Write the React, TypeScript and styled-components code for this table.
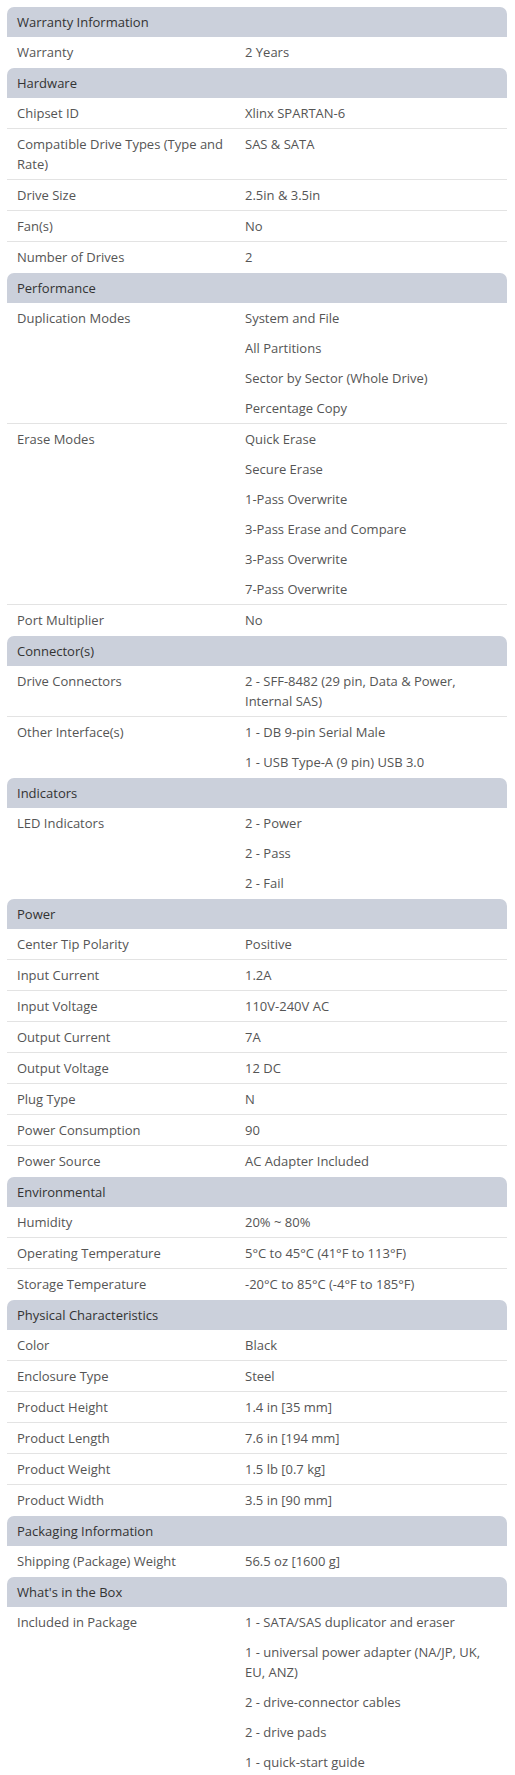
import styled, { createGlobalStyle } from "styled-components";

const GlobalStyle = createGlobalStyle`
	body {
		margin: 0;
		background: #fff;
		font-family: "Open Sans", "Liberation Sans", sans-serif;
	}
`;

type Spec = { label: string; values: string[] };
type Section = { title: string; rows: Spec[] };

const sections: Section[] = [
	{ title: "Warranty Information", rows: [{ label: "Warranty", values: ["2 Years"] }] },
	{
		title: "Hardware",
		rows: [
			{ label: "Chipset ID", values: ["Xlinx SPARTAN-6"] },
			{ label: "Compatible Drive Types (Type and Rate)", values: ["SAS & SATA"] },
			{ label: "Drive Size", values: ["2.5in & 3.5in"] },
			{ label: "Fan(s)", values: ["No"] },
			{ label: "Number of Drives", values: ["2"] },
		],
	},
	{
		title: "Performance",
		rows: [
			{
				label: "Duplication Modes",
				values: ["System and File", "All Partitions", "Sector by Sector (Whole Drive)", "Percentage Copy"],
			},
			{
				label: "Erase Modes",
				values: [
					"Quick Erase",
					"Secure Erase",
					"1-Pass Overwrite",
					"3-Pass Erase and Compare",
					"3-Pass Overwrite",
					"7-Pass Overwrite",
				],
			},
			{ label: "Port Multiplier", values: ["No"] },
		],
	},
	{
		title: "Connector(s)",
		rows: [
			{ label: "Drive Connectors", values: ["2 - SFF-8482 (29 pin, Data & Power, Internal SAS)"] },
			{ label: "Other Interface(s)", values: ["1 - DB 9-pin Serial Male", "1 - USB Type-A (9 pin) USB 3.0"] },
		],
	},
	{
		title: "Indicators",
		rows: [{ label: "LED Indicators", values: ["2 - Power", "2 - Pass", "2 - Fail"] }],
	},
	{
		title: "Power",
		rows: [
			{ label: "Center Tip Polarity", values: ["Positive"] },
			{ label: "Input Current", values: ["1.2A"] },
			{ label: "Input Voltage", values: ["110V-240V AC"] },
			{ label: "Output Current", values: ["7A"] },
			{ label: "Output Voltage", values: ["12 DC"] },
			{ label: "Plug Type", values: ["N"] },
			{ label: "Power Consumption", values: ["90"] },
			{ label: "Power Source", values: ["AC Adapter Included"] },
		],
	},
	{
		title: "Environmental",
		rows: [
			{ label: "Humidity", values: ["20% ~ 80%"] },
			{ label: "Operating Temperature", values: ["5°C to 45°C (41°F to 113°F)"] },
			{ label: "Storage Temperature", values: ["-20°C to 85°C (-4°F to 185°F)"] },
		],
	},
	{
		title: "Physical Characteristics",
		rows: [
			{ label: "Color", values: ["Black"] },
			{ label: "Enclosure Type", values: ["Steel"] },
			{ label: "Product Height", values: ["1.4 in [35 mm]"] },
			{ label: "Product Length", values: ["7.6 in [194 mm]"] },
			{ label: "Product Weight", values: ["1.5 lb [0.7 kg]"] },
			{ label: "Product Width", values: ["3.5 in [90 mm]"] },
		],
	},
	{
		title: "Packaging Information",
		rows: [{ label: "Shipping (Package) Weight", values: ["56.5 oz [1600 g]"] }],
	},
	{
		title: "What's in the Box",
		rows: [
			{
				label: "Included in Package",
				values: [
					"1 - SATA/SAS duplicator and eraser",
					"1 - universal power adapter (NA/JP, UK, EU, ANZ)",
					"2 - drive-connector cables",
					"2 - drive pads",
					"1 - quick-start guide",
				],
			},
		],
	},
];

const SpecTable = styled.div`
	width: 500px;
	margin: 7px;
	font-size: 13px;
	line-height: 20px;
	color: #555;
`;

const SectionHeader = styled.div`
	background: #cbd0db;
	color: #333;
	padding: 5px 10px;
	border-radius: 7px 7px 0 0;
`;

const Row = styled.div<{ $last: boolean }>`
	display: grid;
	grid-template-columns: 228px 1fr;
	border-bottom: 1px solid ${(p) => (p.$last ? "#fff" : "#e3e3e3")};
`;

const Label = styled.div`
	padding: 5px 10px;
`;

const Values = styled.div`
	padding: 0 10px;
`;

const Value = styled.div`
	padding: 5px 0;
`;

export default function App() {
	return (
		<>
			<GlobalStyle />
			<SpecTable>
				{sections.map((section) => (
					<div key={section.title}>
						<SectionHeader>{section.title}</SectionHeader>
						{section.rows.map((row, i) => (
							<Row key={row.label} $last={i === section.rows.length - 1}>
								<Label>{row.label}</Label>
								<Values>
									{row.values.map((v) => (
										<Value key={v}>{v}</Value>
									))}
								</Values>
							</Row>
						))}
					</div>
				))}
			</SpecTable>
		</>
	);
}
